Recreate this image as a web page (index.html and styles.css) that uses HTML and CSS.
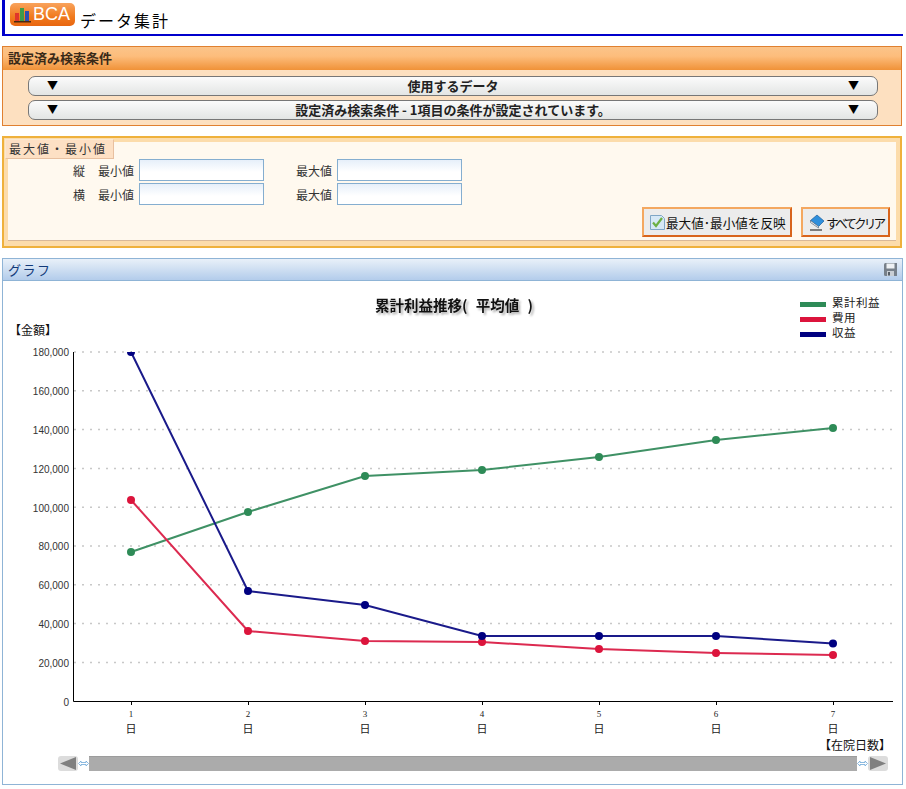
FILE: index.html
```html
<!DOCTYPE html>
<html lang="ja">
<head>
    <meta charset="UTF-8">
    <title>データ集計</title>
    <link rel="stylesheet" href="styles.css">
</head>
<body>
  <!-- page title -->
  <header class="page-title">
    <div class="logo">
      <svg class="logo-bars" width="18" height="16" viewBox="0 0 18 16">
        <rect x="1" y="6" width="4" height="8" fill="#e0352b"/>
        <rect x="6" y="1" width="4" height="13" fill="#3c9a4a"/>
        <rect x="11" y="4" width="4" height="10" fill="#2c4fb0"/>
        <rect x="0" y="14" width="17" height="1.500" fill="#4a2a10"/>
      </svg>
      <span>BCA</span>
    </div>
    <h1>データ集計</h1>
  </header>

  <!-- search conditions -->
  <section class="cond-panel">
    <h2 class="cond-head">設定済み検索条件</h2>
    <div class="cond-body">
      <div class="accordion"><span class="arrow">▼</span><b>使用するデータ</b><span class="arrow">▼</span></div>
      <div class="accordion"><span class="arrow">▼</span><b>設定済み検索条件 - 1項目の条件が設定されています。</b><span class="arrow">▼</span></div>
    </div>
  </section>

  <!-- min / max -->
  <section class="range-panel">
    <div class="range-inner">
      <div class="range-tag">最大値・最小値</div>
      <div class="range-rows">
        <div class="range-row">
          <span class="axis-name">縦</span><label class="lbl-min">最小値</label><input class="num" type="text">
          <label class="lbl-max">最大値</label><input class="num" type="text">
        </div>
        <div class="range-row">
          <span class="axis-name">横</span><label class="lbl-min">最小値</label><input class="num" type="text">
          <label class="lbl-max">最大値</label><input class="num" type="text">
        </div>
      </div>
      <div class="range-actions">
        <button class="act act-apply" type="button">
          <svg width="17" height="17" viewBox="0 0 17 17">
            <path d="M1.500 1.500h11l3 3v11h-14z" fill="#d6e8f6" stroke="#7fa6c6"/>
            <path d="M4 8.500l3 3.500 6-8" fill="none" stroke="#6cb044" stroke-width="2.200"/>
          </svg>最大値･最小値を反映</button>
        <button class="act act-clear" type="button">
          <svg width="17" height="17" viewBox="0 0 17 17">
            <path d="M9 1l7 6-5.500 5.500L2.500 6.500z" fill="#2f8fdc" stroke="#1c5f9c" stroke-width=".7"/>
            <path d="M2.500 6.500l8 6v1.500l-8-5.500z" fill="#f2f5f8" stroke="#55697c" stroke-width=".7"/>
            <path d="M2 16h12" stroke="#333" stroke-width="1.200"/>
          </svg><span class="kana">すべてクリア</span></button>
      </div>
    </div>
  </section>

  <!-- graph -->
  <section class="graph-panel">
    <div class="graph-head">
      <h2>グラフ</h2>
      <svg class="save-icon" width="15" height="15" viewBox="0 0 15 15">
        <path d="M1 2.500Q1 1 2.500 1H14v12.500q0 .5-.5.5h-11Q1 14 1 12.500z" fill="#77808a"/>
        <rect x="3.500" y="1.500" width="8" height="5" fill="#eef1f4"/>
        <rect x="4" y="9" width="7" height="5" fill="#c9ced4"/>
        <rect x="5" y="10" width="2" height="3.500" fill="#555d66"/>
      </svg>
    </div>
    <svg class="chart" viewBox="3 281 899 471" width="899" height="471">
      <g class="grid">
        <line x1="74" x2="893" y1="352" y2="352"/>
        <line x1="74" x2="893" y1="390.800" y2="390.800"/>
        <line x1="74" x2="893" y1="429.600" y2="429.600"/>
        <line x1="74" x2="893" y1="468.400" y2="468.400"/>
        <line x1="74" x2="893" y1="507.200" y2="507.200"/>
        <line x1="74" x2="893" y1="546" y2="546"/>
        <line x1="74" x2="893" y1="584.800" y2="584.800"/>
        <line x1="74" x2="893" y1="623.600" y2="623.600"/>
        <line x1="74" x2="893" y1="662.400" y2="662.400"/>
      </g>
      <path class="axis" d="M73.500 352V701.500H893"/>
      <path class="axis" d="M131.500 701v4M248.500 701v4M365.500 701v4M482.500 701v4M599.500 701v4M716.500 701v4M833.500 701v4"/>

      <g class="y-labels">
        <text x="69" y="356">180,000</text>
        <text x="69" y="395">160,000</text>
        <text x="69" y="434">140,000</text>
        <text x="69" y="473">120,000</text>
        <text x="69" y="512">100,000</text>
        <text x="69" y="550">80,000</text>
        <text x="69" y="589">60,000</text>
        <text x="69" y="628">40,000</text>
        <text x="69" y="667">20,000</text>
        <text x="69" y="706">0</text>
      </g>
      <g class="x-labels">
        <text x="131" y="717">1</text><text class="day" x="131" y="733">日</text>
        <text x="248" y="717">2</text><text class="day" x="248" y="733">日</text>
        <text x="365" y="717">3</text><text class="day" x="365" y="733">日</text>
        <text x="482" y="717">4</text><text class="day" x="482" y="733">日</text>
        <text x="599" y="717">5</text><text class="day" x="599" y="733">日</text>
        <text x="716" y="717">6</text><text class="day" x="716" y="733">日</text>
        <text x="833" y="717">7</text><text class="day" x="833" y="733">日</text>
      </g>

      <text class="chart-title" x="375" y="311">累計利益推移( 平均値 )</text>
      <text class="axis-title" x="9" y="335">【金額】</text>
      <text class="axis-title" x="819" y="750">【在院日数】</text>

      <rect x="800" y="302" width="26" height="5" fill="#2e8b57"/>
      <rect x="800" y="317" width="26" height="5" fill="#dc143c"/>
      <rect x="800" y="332" width="26" height="5" fill="#000080"/>
      <text class="legend" x="832" y="307">累計利益</text>
      <text class="legend" x="832" y="322">費用</text>
      <text class="legend" x="832" y="337">収益</text>

      <polyline class="s-green" points="131,552 248,512 365,476 482,470 599,457 716,440 833,428"/>
      <polyline class="s-red" points="131,500 248,631 365,641 482,642 599,649 716,653 833,655"/>
      <polyline class="s-navy" points="131,352 248,591 365,605 482,636 599,636 716,636 833,643.500"/>
      <g fill="#2e8b57">
        <circle cx="131" cy="552" r="4"/><circle cx="248" cy="512" r="4"/><circle cx="365" cy="476" r="4"/><circle cx="482" cy="470" r="4"/><circle cx="599" cy="457" r="4"/><circle cx="716" cy="440" r="4"/><circle cx="833" cy="428" r="4"/>
      </g>
      <g fill="#dc143c">
        <circle cx="131" cy="500" r="4"/><circle cx="248" cy="631" r="4"/><circle cx="365" cy="641" r="4"/><circle cx="482" cy="642" r="4"/><circle cx="599" cy="649" r="4"/><circle cx="716" cy="653" r="4"/><circle cx="833" cy="655" r="4"/>
      </g>
      <g fill="#000080">
        <path d="M127 352a4 4 0 0 0 8 0z"/><circle cx="248" cy="591" r="4"/><circle cx="365" cy="605" r="4"/><circle cx="482" cy="636" r="4"/><circle cx="599" cy="636" r="4"/><circle cx="716" cy="636" r="4"/><circle cx="833" cy="643.500" r="4"/>
      </g>
    </svg>

    <!-- range slider under the chart -->
    <div class="slider">
      <div class="slider-btn"><svg width="16" height="13" viewBox="0 0 16 13"><path d="M0 6.500L16 0v13z" fill="#808080"/></svg></div>
      <svg class="grip" width="11" height="7" viewBox="0 0 11 7"><path d="M3 1L.5 3.500 3 6V4.500h5V6l2.500-2.500L8 1v1.500H3z" fill="#fff" stroke="#6fa8d8" stroke-width=".8"/></svg>
      <div class="slider-bar"></div>
      <svg class="grip" width="11" height="7" viewBox="0 0 11 7"><path d="M3 1L.5 3.500 3 6V4.500h5V6l2.500-2.500L8 1v1.500H3z" fill="#fff" stroke="#6fa8d8" stroke-width=".8"/></svg>
      <div class="slider-btn"><svg width="16" height="13" viewBox="0 0 16 13"><path d="M16 6.500L0 0v13z" fill="#808080"/></svg></div>
    </div>
  </section>
</body>
</html>
```

FILE: styles.css
```css
body {
  margin: 0;
  padding: 0 2px;
  background: #fff;
  color: #222;
  font-family: "Noto Sans CJK JP", "Liberation Sans", sans-serif;
  font-size: 12px;
}

/* page title */
.page-title {
  display: flex;
  align-items: flex-start;
  height: 34px;
  width: 898px;
  border-left: 3px solid #0000cc;
  border-bottom: 2px solid #0000cc;
}
.logo {
  display: flex;
  align-items: center;
  gap: 1px;
  width: 65px;
  height: 23px;
  margin: 3px 0 0 5px;
  padding-left: 4px;
  box-sizing: border-box;
  border-radius: 5px;
  background: linear-gradient(#f9a35c, #f07a1e 60%, #e8650f);
}
.logo span {
  color: #fff;
  font-family: "Liberation Sans", sans-serif;
  font-size: 18px;
  line-height: 23px;
}
.page-title h1 {
  margin: 9px 0 0 5px;
  font-size: 16px;
  font-weight: 400;
  line-height: 22px;
  letter-spacing: 2px;
  color: #000;
}

/* search conditions */
.cond-panel {
  margin-top: 10px;
  width: 900px;
  height: 80px;
  box-sizing: border-box;
  border: 1px solid #e08030;
  background: #fde0c0;
}
.cond-head {
  margin: 0;
  height: 23px;
  padding-left: 5px;
  font-size: 13px;
  font-weight: 700;
  line-height: 21px;
  color: #3a2a18;
  background: linear-gradient(#fbc48a, #fdbd7c 40%, #f09238);
}
.cond-body {
  display: flex;
  flex-direction: column;
  gap: 4px;
  padding: 6px 23px 0 25px;
}
.accordion {
  display: flex;
  justify-content: space-between;
  align-items: center;
  height: 20px;
  padding: 0 18px 2px;
  box-sizing: border-box;
  border: 1px solid #777;
  border-radius: 7px;
  background: linear-gradient(#fbfbfb, #e3e5e4);
  color: #222;
}
.accordion b {
  font-size: 13px;
}
.arrow {
  font-size: 11px;
  color: #000;
}

/* min / max */
.range-panel {
  margin-top: 10px;
  width: 900px;
  height: 112px;
  box-sizing: border-box;
  border: 2px solid #efb13c;
  background: #fcdcab;
  padding: 4px 4px 5px;
}
.range-inner {
  position: relative;
  height: 100%;
  background: #fff9ef;
  border-bottom: 1px solid #d8b898;
  box-sizing: border-box;
}
.range-tag {
  position: absolute;
  left: -3px;
  top: -3px;
  width: 109px;
  height: 20px;
  box-sizing: border-box;
  padding-left: 3px;
  border: 1px solid #fbe8d0;
  border-bottom-color: #e8c0a0;
  border-right-color: #e8c0a0;
  background: #fde0c4;
  font-size: 12px;
  line-height: 18px;
  letter-spacing: 2px;
  color: #333;
}
.range-rows {
  display: flex;
  flex-direction: column;
  gap: 2px;
  padding-top: 17px;
}
.range-row {
  display: flex;
  align-items: center;
  height: 22px;
  color: #333;
}
.axis-name {
  width: 77px;
  text-align: right;
}
.lbl-min {
  margin-left: 13px;
  width: 36px;
  margin-right: 5px;
}
.lbl-max {
  margin-left: 32px;
  width: 36px;
  margin-right: 5px;
}
.num {
  width: 125px;
  height: 22px;
  padding: 0;
  box-sizing: border-box;
  border: 1px solid #85aed0;
  background: linear-gradient(#e6eff9, #fff 60%);
}
.range-actions {
  display: flex;
  justify-content: flex-end;
  gap: 9px;
  margin-top: 2px;
  padding-right: 6px;
}
.act {
  display: flex;
  align-items: center;
  height: 30px;
  padding: 0 0 0 5px;
  box-sizing: border-box;
  border: 2px solid #f4a860;
  border-right-color: #d8641c;
  border-bottom-color: #d8641c;
  background: #ececec;
  font-family: inherit;
  font-size: 12.600px;
  color: #111;
  white-space: nowrap;
}
.act-apply { width: 150px; }
.act-clear { width: 89px; }
.act svg { flex: none; }
.kana {
  margin-left: 1px;
  letter-spacing: -2.800px;
}

/* graph */
.graph-panel {
  margin-top: 10px;
  width: 901px;
  height: 527px;
  box-sizing: border-box;
  border: 1px solid #8fb4d6;
  background: #fff;
}
.graph-head {
  display: flex;
  justify-content: space-between;
  align-items: center;
  height: 22px;
  padding: 0 4px 0 5px;
  box-sizing: border-box;
  border-bottom: 1px solid #8fb4d6;
  background: linear-gradient(#e8f0f9, #d3e2f3 40%, #b3cceb);
}
.graph-head h2 {
  margin: 0;
  font-size: 13px;
  font-weight: 400;
  letter-spacing: 1.500px;
  color: #123a7a;
}
.chart {
  display: block;
}
.grid line {
  stroke: #c8c8c8;
  stroke-width: 1.500;
  stroke-dasharray: 2 6;
}
.axis {
  fill: none;
  stroke: #000;
  stroke-width: 1;
}
.y-labels text {
  font-family: "Liberation Sans", sans-serif;
  font-size: 10px;
  text-anchor: end;
  fill: #333;
}
.x-labels text {
  font-family: "Liberation Serif", serif;
  font-size: 9px;
  text-anchor: middle;
  fill: #222;
}
.x-labels .day {
  font-family: "Noto Sans CJK JP", sans-serif;
  font-size: 11px;
}
.chart-title {
  font-size: 14.500px;
  font-weight: 700;
  word-spacing: 5px;
  fill: #111;
  filter: drop-shadow(2px 2px 1px #aaa);
}
.axis-title {
  font-size: 12px;
  fill: #111;
}
.legend {
  font-size: 11.500px;
  letter-spacing: .5px;
  fill: #222;
}
.s-green, .s-red, .s-navy {
  fill: none;
  stroke-width: 2;
}
.s-green { stroke: #3f9165; }
.s-red { stroke: #dc2a50; }
.s-navy { stroke: #1a1a8a; }

.slider {
  display: flex;
  align-items: center;
  height: 15px;
  margin: 4px 0 0 55px;
  width: 830px;
}
.slider-btn {
  display: flex;
  align-items: center;
  justify-content: center;
  flex: none;
  width: 20px;
  height: 15px;
  border-radius: 3px;
  background: #dcdcdc;
}
.grip {
  width: 11px;
  flex: none;
}
.slider-bar {
  flex: 1;
  height: 15px;
  background: #ababab;
  border-top: 1px solid #9c9c9c;
  box-sizing: border-box;
}
```
